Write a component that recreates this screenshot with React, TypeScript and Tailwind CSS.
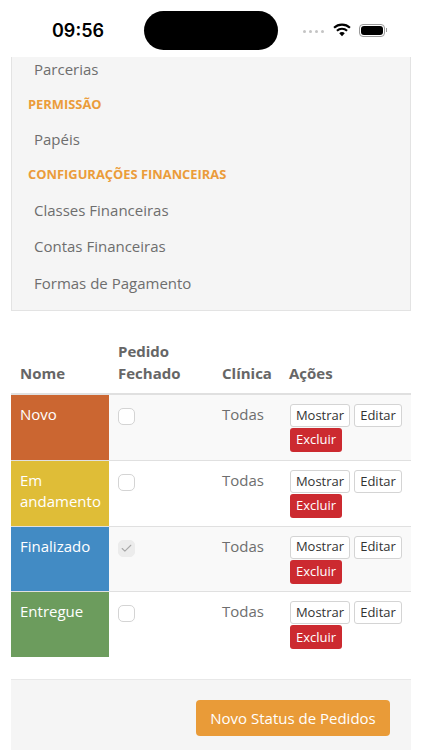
import { Check } from 'lucide-react';

const rows = [
  { name: 'Novo', color: 'bg-[#cb6631]', closed: false, stripe: true },
  { name: 'Em andamento', color: 'bg-[#dfbd37]', closed: false, stripe: false },
  { name: 'Finalizado', color: 'bg-[#428bc4]', closed: true, stripe: true },
  { name: 'Entregue', color: 'bg-[#6c9c5d]', closed: false, stripe: false },
];

function StatusBar() {
  return (
    <div className="h-[57px] flex items-center justify-between bg-white relative">
      <span className="ml-[52px] mt-[3px] text-[18px] font-semibold font-['Inter',sans-serif] text-black">09:56</span>
      <div className="absolute left-[144px] top-[11px] w-[134px] h-[39px] rounded-full bg-black" />
      <div className="flex items-center mr-[35px] mt-[3px]">
        <div className="flex gap-[3px] mr-[9px] mt-[2px]">
          <span className="w-[3px] h-[3px] rounded-full bg-[#c4c4c4]" />
          <span className="w-[3px] h-[3px] rounded-full bg-[#c4c4c4]" />
          <span className="w-[3px] h-[3px] rounded-full bg-[#c4c4c4]" />
          <span className="w-[3px] h-[3px] rounded-full bg-[#c4c4c4]" />
        </div>
        <svg width="18" height="14" viewBox="0 0 17 13" className="mr-[8px]">
          <path d="M1 4.4a11 11 0 0 1 15 0" fill="none" stroke="black" strokeWidth="2" />
          <path d="M3.7 7.2a7 7 0 0 1 9.6 0" fill="none" stroke="black" strokeWidth="2" />
          <path d="M5.9 9.5 8.5 12.5 11.1 9.5a3.6 3.6 0 0 0-5.2 0z" fill="black" />
        </svg>
        <div className="w-[26px] h-[13px] rounded-[4px] border border-[#9a9a9a] p-[1px]">
          <div className="w-full h-full rounded-[3px] bg-black" />
        </div>
        <div className="w-[1px] h-[4px] bg-[#9a9a9a] ml-[1px]" />
      </div>
    </div>
  );
}

function MenuLink({ label }: { label: string }) {
  return <div className="pl-[22px] h-[36.5px] flex items-center text-[15px] text-[#6e6e6e]">{label}</div>;
}

function MenuTitle({ label }: { label: string }) {
  return <div className="pl-[16px] pt-[1px] h-[34px] flex items-center text-[12.9px] font-bold text-[#eb9c3a]">{label}</div>;
}

function Checkbox({ checked }: { checked: boolean }) {
  return (
    <div
      className={`w-[17px] h-[17px] rounded-[5px] border flex items-center justify-center ${
        checked ? 'bg-[#ececec] border-[#ececec]' : 'bg-white border-[#d4d4d4]'
      }`}
    >
      {checked && <Check size={13} strokeWidth={2} className="text-[#a8a8a8]" />}
    </div>
  );
}

function Row({ name, color, closed, stripe }: { name: string; color: string; closed: boolean; stripe: boolean }) {
  return (
    <div className={`flex h-[65.8px] border-t border-[#e0e0e0] text-[15px] ${stripe ? 'bg-[#f9f9f9]' : 'bg-white'}`}>
      <div className={`w-[98px] px-[9px] pt-[9px] leading-[21px] text-white ${color}`}>{name}</div>
      <div className="w-[104px] pl-[9px] pt-[13px]">
        <Checkbox checked={closed} />
      </div>
      <div className="w-[67px] pl-[9px] pt-[9px] leading-[21px] text-[#6e6e6e]">Todas</div>
      <div className="flex-1 pl-[10px] pt-[9px]">
        <div className="flex gap-[4px]">
          <button className="w-[60px] h-[23px] rounded-[3px] border border-[#d4d4d4] bg-white text-[13px] text-[#333]">Mostrar</button>
          <button className="w-[48px] h-[23px] rounded-[3px] border border-[#d4d4d4] bg-white text-[13px] text-[#333]">Editar</button>
        </div>
        <button className="block mt-[1px] w-[52px] h-[24px] rounded-[3px] bg-[#cc2a30] text-[13px] text-white">Excluir</button>
      </div>
    </div>
  );
}

export default function App() {
  return (
    <div className="w-[422px] h-[750px] overflow-hidden bg-white font-['Open_Sans',sans-serif]">
      <StatusBar />
      <div className="mx-[11px] h-[254px] bg-[#f5f5f5] border-x border-b border-[#e3e3e3]">
        <div className="h-[25px] mb-[5px] pl-[22px] flex items-center text-[15px] text-[#6e6e6e]">Parcerias</div>
        <MenuTitle label="PERMISSÃO" />
        <MenuLink label="Papéis" />
        <MenuTitle label="CONFIGURAÇÕES FINANCEIRAS" />
        <MenuLink label="Classes Financeiras" />
        <MenuLink label="Contas Financeiras" />
        <MenuLink label="Formas de Pagamento" />
      </div>
      <div className="mx-[11px] mt-[30px]">
        <div className="flex items-end h-[52px] pb-[9px] text-[15px] font-bold leading-[21.5px] text-[#666]">
          <div className="w-[98px] pl-[9px]">Nome</div>
          <div className="w-[104px] pl-[9px]">Pedido<br />Fechado</div>
          <div className="w-[67px] pl-[9px]">Clínica</div>
          <div className="flex-1 pl-[9px]">Ações</div>
        </div>
        <div className="border-t border-[#e0e0e0]">
          {rows.map((row) => (
            <Row key={row.name} {...row} />
          ))}
        </div>
      </div>
      <div className="mx-[11px] mt-[22px] h-[80px] bg-[#f5f5f5] border-t border-[#e8e8e8] flex justify-end pt-[20px] pr-[21px]">
        <button className="w-[194px] h-[36px] rounded-[4px] bg-[#e99b38] text-[15px] text-white">Novo Status de Pedidos</button>
      </div>
    </div>
  );
}
